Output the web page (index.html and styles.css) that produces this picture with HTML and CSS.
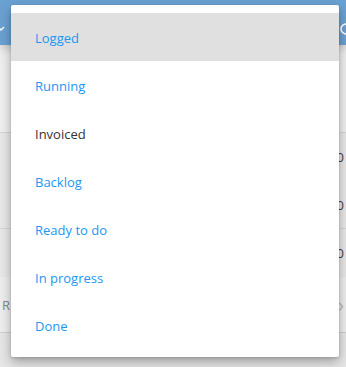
FILE: index.html
```html
<!DOCTYPE html>
<html lang="en">
<head>
    <meta charset="UTF-8">
    <meta name="viewport" content="width=device-width, initial-scale=1.0">
    <title>Status filter</title>
    <link rel="stylesheet" href="styles.css">
</head>
<body>
    <!-- Page behind the menu -->
    <div class="page">
        <header class="toolbar">
            <svg class="toolbar-caret" width="8" height="6" viewBox="0 0 8 6">
                <path d="M1 1l3 3 3-3" fill="none" stroke="#fff" stroke-width="1.4"/>
            </svg>
            <svg class="toolbar-refresh" width="16" height="16" viewBox="0 0 16 16">
                <path d="M13 8a5 5 0 1 1-1.5-3.6" fill="none" stroke="#fff" stroke-width="1.6"/>
                <path d="M12.5 1.5v3.5H9" fill="none" stroke="#fff" stroke-width="1.6"/>
            </svg>
        </header>
        <div class="row row-first"></div>
        <div class="row row-value"><span class="value">0</span></div>
        <div class="row row-value"><span class="value">0</span></div>
        <div class="row row-value"><span class="value">0</span></div>
        <div class="row row-link">
            <span class="label">R</span>
            <span class="chevron">&#8250;</span>
        </div>
    </div>

    <!-- Dropdown menu -->
    <ul class="menu">
        <li class="menu-item is-active">Logged</li>
        <li class="menu-item">Running</li>
        <li class="menu-item is-plain">Invoiced</li>
        <li class="menu-item">Backlog</li>
        <li class="menu-item">Ready to do</li>
        <li class="menu-item">In progress</li>
        <li class="menu-item">Done</li>
    </ul>
</body>
</html>
```

FILE: styles.css
```css
* {
    margin: 0;
    padding: 0;
    box-sizing: border-box;
}

body {
    font-family: 'Open Sans', 'Noto Sans', sans-serif;
    background: #e6e6e6;
    width: 346px;
    height: 367px;
    overflow: hidden;
    position: relative;
}

/* Page behind */
.page {
    display: flex;
    flex-direction: column;
}

.toolbar {
    height: 45px;
    background: #6aa1d2;
    display: flex;
    align-items: center;
    justify-content: space-between;
    padding-top: 12px;
    box-shadow: 0 4px 8px rgba(0, 0, 0, 0.15);
    position: relative;
    z-index: 1;
}

.toolbar-caret {
    margin-left: -3px;
}

.toolbar-refresh {
    margin-right: -8px;
}

.row {
    height: 48px;
    background: #efefef;
    display: flex;
    align-items: center;
    justify-content: space-between;
    padding: 0 2px;
    color: #444;
    font-size: 13px;
}

.row-first {
    height: 88px;
    border-bottom: 1px solid #d6d6d6;
}

.row-value {
    justify-content: flex-end;
    background: #e8e8e8;
}

.row-value:nth-child(4) {
    border-bottom: 1px solid #d6d6d6;
}

.row-link {
    height: 56px;
    background: #eeeeee;
    border-bottom: 1px solid #d0d0d0;
    color: #888;
}

.chevron {
    font-size: 20px;
    color: #bbb;
}

/* Dropdown menu */
.menu {
    list-style: none;
    position: absolute;
    top: 5px;
    left: 11px;
    width: 328px;
    padding: 8px 0;
    background: #fff;
    border-radius: 2px;
    box-shadow: 0 5px 12px rgba(0, 0, 0, 0.3), 0 1px 3px rgba(0, 0, 0, 0.15);
    z-index: 10;
}

.menu-item {
    height: 48px;
    display: flex;
    align-items: center;
    padding: 2px 0 0 24px;
    font-size: 13px;
    color: #2196f3;
}

.menu-item.is-active {
    background: #e0e0e0;
}

.menu-item.is-plain {
    color: #333;
}
```
